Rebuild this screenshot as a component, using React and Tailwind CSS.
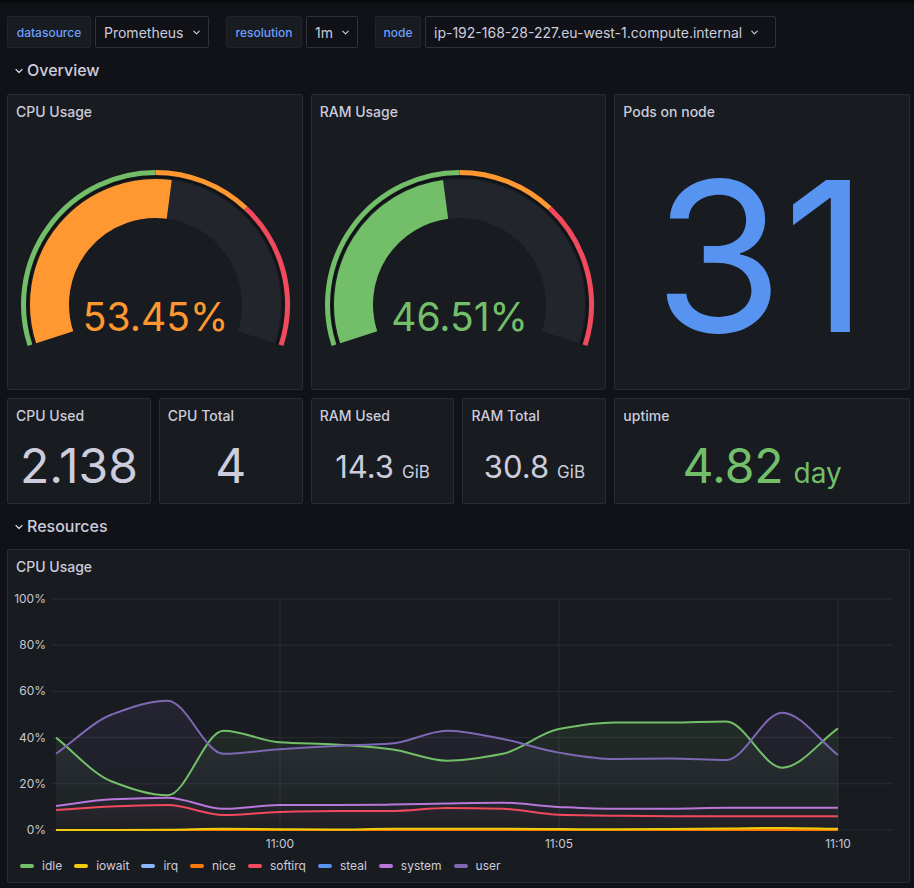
import React from "react";
import { ChevronDown } from "lucide-react";

const SERIES = [
  { name: "idle", color: "#73bf69", fill: true, v: [40, 21, 15, 43, 38, 37, 35, 30, 33, 43.7, 46.5, 46.5, 47, 27, 44] },
  { name: "iowait", color: "#f2cc0c", v: [0, 0, 0.1, 0.5, 0.3, 0.2, 0.5, 0.5, 0.5, 0.4, 0.3, 0.4, 0.6, 0.9, 0.5] },
  { name: "irq", color: "#8ab8ff", v: [0, 0, 0, 0, 0, 0, 0, 0, 0, 0, 0, 0, 0, 0, 0] },
  { name: "nice", color: "#ff780a", v: [0, 0, 0, 0, 0, 0, 0, 0, 0, 0, 0, 0, 0, 0, 0] },
  { name: "softirq", color: "#f2495c", fill: true, v: [8.7, 10.2, 10.8, 6.5, 7.8, 8.2, 8.2, 9.5, 9.2, 6.6, 6.2, 6, 6, 6, 6] },
  { name: "steal", color: "#5794f2", v: [0, 0, 0, 0, 0, 0, 0, 0, 0, 0, 0, 0, 0, 0, 0] },
  { name: "system", color: "#b877d9", fill: true, v: [10.4, 13.3, 14, 9.2, 10.8, 10.8, 11, 11.5, 11.8, 10, 9.2, 9.2, 9.6, 9.6, 9.6] },
  { name: "user", color: "#7e68b4", fill: true, v: [33, 50, 56, 33, 35, 36.4, 37.4, 43, 39.4, 33.5, 30.7, 30.9, 30.3, 50.8, 32.5] },
];

// zero-valued series go underneath so the orange "nice" line shows on top, like the original
const DRAW_ORDER = ["irq", "steal", "nice", "iowait", "idle", "softirq", "system", "user"];

const px = (i) => 48 + (i * 782) / 14;
const py = (v) => 248 - v * 2.31;

// monotone cubic, same idea as uPlot's spline
function smoothPath(vals) {
  const pts = vals.map((v, i) => [px(i), py(v)]);
  const n = pts.length;
  const d = [];
  const m = [];
  for (let i = 0; i < n - 1; i++) d.push((pts[i + 1][1] - pts[i][1]) / (pts[i + 1][0] - pts[i][0]));
  m[0] = d[0];
  m[n - 1] = d[n - 2];
  for (let i = 1; i < n - 1; i++) {
    m[i] = d[i - 1] * d[i] > 0 ? 2 / (1 / d[i - 1] + 1 / d[i]) : 0;
  }
  let s = `M${pts[0][0]},${pts[0][1]}`;
  for (let i = 0; i < n - 1; i++) {
    const h = (pts[i + 1][0] - pts[i][0]) / 3;
    s += ` C${pts[i][0] + h},${pts[i][1] + m[i] * h} ${pts[i + 1][0] - h},${pts[i + 1][1] - m[i + 1] * h} ${pts[i + 1][0]},${pts[i + 1][1]}`;
  }
  return s;
}

function arc(cx, cy, r, a0, a1) {
  const p = (a) => [cx + r * Math.sin((a * Math.PI) / 180), cy - r * Math.cos((a * Math.PI) / 180)];
  const [x0, y0] = p(a0);
  const [x1, y1] = p(a1);
  return `M${x0},${y0} A${r},${r} 0 ${a1 - a0 > 180 ? 1 : 0} 1 ${x1},${y1}`;
}

function Panel({ title, className = "", children }) {
  return (
    <div className={`flex flex-col rounded-[2px] border border-[#2a2c31] bg-[#181b1f] ${className}`}>
      <div className="flex h-8 shrink-0 items-center px-2 pt-[1px] text-sm font-medium text-[#ccccdc]">{title}</div>
      {children}
    </div>
  );
}

function Gauge({ title, value, color }) {
  const cx = 147.5;
  const cy = 177.5;
  const S = 216;
  const a = (f) => -S / 2 + f * S;
  return (
    <Panel title={title} className="col-span-2 h-[296px]">
      <svg width="294" height="262" className="block">
        <path d={arc(cx, cy, 132, a(0), a(0.5))} stroke="#73bf69" strokeWidth="5" fill="none" />
        <path d={arc(cx, cy, 132, a(0.5), a(0.7))} stroke="#ff9830" strokeWidth="5" fill="none" />
        <path d={arc(cx, cy, 132, a(0.7), a(1))} stroke="#f2495c" strokeWidth="5" fill="none" />
        <path d={arc(cx, cy, 127.8, a(0), a(1))} stroke="#0e0f12" strokeWidth="1.2" fill="none" />
        <path d={arc(cx, cy, 106, a(0), a(1))} stroke="#22252b" strokeWidth="39" fill="none" />
        <path d={arc(cx, cy, 106, a(0), a(value / 100))} stroke={color} strokeWidth="39" fill="none" />
        <text x={cx} y="204" textAnchor="middle" fontSize="39" fill={color} fontFamily="Inter, sans-serif">
          {value.toFixed(2)}%
        </text>
      </svg>
    </Panel>
  );
}

function Stat({ title, value, unit, big = 48, small = 17, gap = "ml-[9px]", color = "text-[#ccccdc]", span = "" }) {
  return (
    <Panel title={title} className={`h-[106px] ${span}`}>
      <div className={`flex flex-1 items-center justify-center pb-[2px] ${color}`}>
        <div className="flex items-baseline leading-none">
          <span style={{ fontSize: big }}>{value}</span>
          {unit && (
            <span className={gap} style={{ fontSize: small }}>
              {unit}
            </span>
          )}
        </div>
      </div>
    </Panel>
  );
}

function Variable({ label, value, lw, sw }) {
  return (
    <div className="flex items-center gap-1">
      <div className={`flex h-8 items-center justify-center rounded-[2px] border border-[#23252a] bg-[#181b1f] pt-[1px] text-xs font-medium text-[#6e9fff] ${lw}`}>
        {label}
      </div>
      <div className={`flex h-8 items-center gap-[7px] rounded-[2px] border border-[#303238] bg-[#111217] pl-2 pt-[1px] text-sm text-[#ccccdc] ${sw}`}>
        {value}
        <ChevronDown size={11} strokeWidth={2.5} />
      </div>
    </div>
  );
}

function RowTitle({ title, h }) {
  return (
    <div className={`flex items-center gap-[2px] pb-[2px] pl-[6px] text-base font-medium text-[#ccccdc] ${h}`}>
      <ChevronDown size={12} strokeWidth={2.5} className="mt-[2px]" />
      {title}
    </div>
  );
}

function Chart() {
  const yl = [100, 80, 60, 40, 20, 0];
  const xt = [
    [272, "11:00"],
    [551, "11:05"],
    [830, "11:10"],
  ];
  const byName = Object.fromEntries(SERIES.map((s) => [s.name, s]));
  return (
    <svg width="900" height="270" className="block">
      <defs>
        {SERIES.map((s) => (
          <linearGradient key={s.name} id={`g-${s.name}`} x1="0" y1="17" x2="0" y2="248" gradientUnits="userSpaceOnUse">
            <stop offset="0" stopColor={s.color} stopOpacity="0.22" />
            <stop offset="1" stopColor={s.color} stopOpacity="0.01" />
          </linearGradient>
        ))}
      </defs>
      {yl.map((v) => (
        <g key={v}>
          <line x1="44" x2="885" y1={py(v)} y2={py(v)} stroke="#2b2d32" strokeWidth="1" />
          <text x="38" y={py(v) + 4} textAnchor="end" fontSize="12" fill="#c7c8d3" fontFamily="Inter, sans-serif">
            {v}%
          </text>
        </g>
      ))}
      {xt.map(([x, t]) => (
        <g key={t}>
          <line x1={x} x2={x} y1="17" y2="248" stroke="#2b2d32" strokeWidth="1" />
          <text x={x} y="266" textAnchor="middle" fontSize="12" fill="#c7c8d3" fontFamily="Inter, sans-serif">
            {t}
          </text>
        </g>
      ))}
      {SERIES.filter((s) => s.fill).map((s) => (
        <path key={s.name} d={`${smoothPath(s.v)} L${px(14)},248 L${px(0)},248 Z`} fill={`url(#g-${s.name})`} />
      ))}
      {DRAW_ORDER.map((n) => byName[n]).map((s) => (
        <path key={s.name} d={smoothPath(s.v)} stroke={s.color} strokeWidth="2" fill="none" />
      ))}
    </svg>
  );
}

export default function App() {
  return (
    <div className="min-h-screen w-full bg-[#111217] font-['Inter',sans-serif] text-[#ccccdc]">
      <div className="h-[5px] bg-gradient-to-b from-[#07080a] to-[#111217]" />
      <div className="pl-[7px] pr-[4px] pt-[11px] pb-2">
        <div className="flex items-center gap-[17px]">
          <Variable label="datasource" value="Prometheus" lw="w-[84px]" sw="w-[114px]" />
          <Variable label="resolution" value="1m" lw="w-[76px]" sw="w-[52px]" />
          <Variable label="node" value="ip-192-168-28-227.eu-west-1.compute.internal" lw="w-[46px]" sw="w-[351px]" />
        </div>

        <RowTitle title="Overview" h="h-[46px]" />

        <div className="grid grid-cols-6 gap-2">
          <Gauge title="CPU Usage" value={53.45} color="#ff9830" />
          <Gauge title="RAM Usage" value={46.51} color="#73bf69" />
          <Panel title="Pods on node" className="col-span-2 h-[296px]">
            <div className="flex flex-1 items-center justify-center pb-[3px] pr-[2px] text-[209px] leading-none text-[#5794f2]">31</div>
          </Panel>

          <Stat title="CPU Used" value="2.138" />
          <Stat title="CPU Total" value="4" />
          <Stat title="RAM Used" value="14.3" unit="GiB" big={31} gap="ml-[8px]" />
          <Stat title="RAM Total" value="30.8" unit="GiB" big={31} gap="ml-[8px]" />
          <Stat title="uptime" value="4.82" unit="day" small={28} gap="ml-[10px]" color="text-[#73bf69]" span="col-span-2" />
        </div>

        <RowTitle title="Resources" h="h-[45px]" />

        <Panel title="CPU Usage" className="h-[334px]">
          <Chart />
          <div className="flex h-[26px] items-center gap-[12px] pl-3 pt-[1px] text-xs text-[#ccccdc]">
            {SERIES.map((s) => (
              <div key={s.name} className="flex items-center gap-2">
                <span className="h-1 w-[14px] rounded-full" style={{ background: s.color }} />
                {s.name}
              </div>
            ))}
          </div>
        </Panel>
      </div>
    </div>
  );
}
